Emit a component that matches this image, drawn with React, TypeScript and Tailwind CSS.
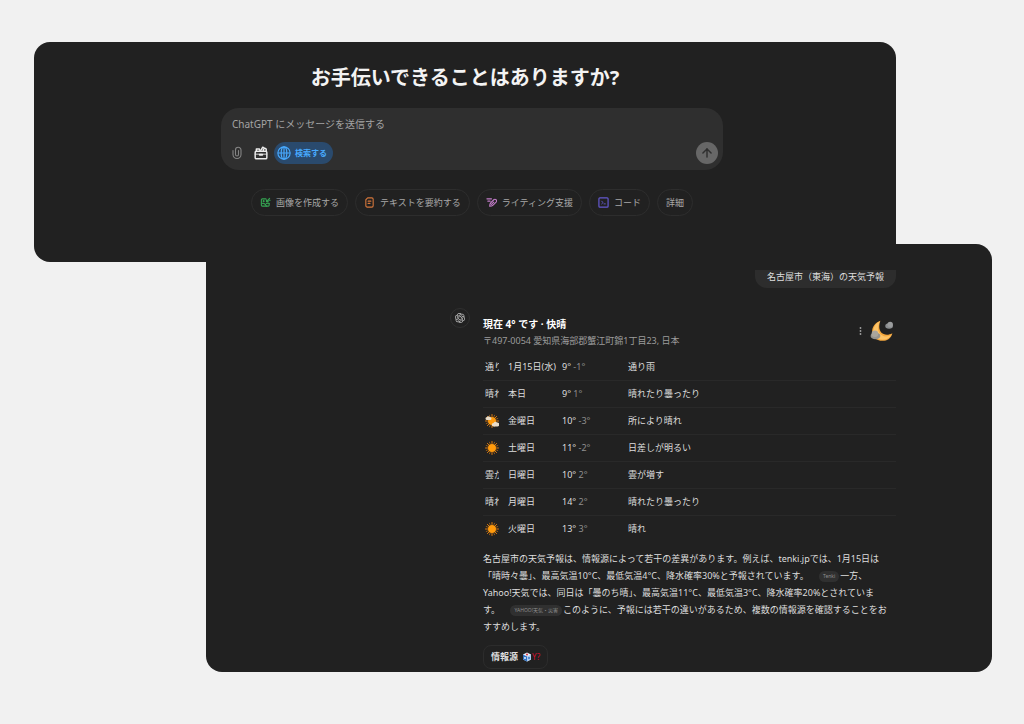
import React from 'react';
import { ArrowUp } from 'lucide-react';
import { RiOpenaiFill } from 'react-icons/ri';

const ClipIcon = () => (
  <svg viewBox="0 0 20 26" className="w-2.5 h-3.5" fill="none" stroke="currentColor" strokeWidth="2.2" strokeLinecap="round">
    <path d="M2 8v8a8 8 0 0 0 16 0V7a5.500 5.500 0 0 0-11 0v9a3 3 0 0 0 6 0V8" />
  </svg>
);

const ToolboxIcon = () => (
  <svg viewBox="0 0 24 24" className="w-3.5 h-3.5" fill="none" stroke="currentColor" strokeWidth="2.5" strokeLinejoin="round" strokeLinecap="round">
    <path d="M4 9h16a2 2 0 0 1 2 2v9a2 2 0 0 1-2 2H4a2 2 0 0 1-2-2v-9a2 2 0 0 1 2-2z" />
    <path d="M2 14h20" strokeWidth="1.500" />
    <path d="M10 15h4" strokeWidth="3.500" />
    <path d="M4 9V5h5l2 4" />
    <path d="M12 7l3-5 3 2M16 8c-1-3 4-6 5-2v3" />
  </svg>
);

const GlobeIcon = () => (
  <svg viewBox="0 0 24 24" className="w-3.5 h-3.5" fill="none" stroke="currentColor" strokeWidth="2">
    <circle cx="12" cy="12" r="10.500" />
    <ellipse cx="12" cy="12" rx="4.800" ry="10.500" />
    <path d="M1.500 12h21M12 1.500v21" />
  </svg>
);

const ImageIcon = () => (
  <svg viewBox="0 0 24 24" className="w-[11px] h-[11px] text-[#35a552]" fill="none" stroke="currentColor" strokeWidth="2.4" strokeLinecap="round" strokeLinejoin="round">
    <path d="M13 4H5a2 2 0 0 0-2 2v12a2 2 0 0 0 2 2h13a2 2 0 0 0 2-2v-4" />
    <path d="M4 14c5-1 8 1 10 6M14 14c2-1 4-1 6 0" />
    <circle cx="8" cy="9" r="1" />
    <path d="M14 10l7-7M14 6v4h4M19 7h3" />
  </svg>
);

const DocIcon = () => (
  <svg viewBox="0 0 24 24" className="w-[11px] h-[11px] text-[#d4763b]" fill="none" stroke="currentColor" strokeWidth="2.4" strokeLinecap="round" strokeLinejoin="round">
    <path d="M8 2h9a3 3 0 0 1 3 3v14a3 3 0 0 1-3 3H7a3 3 0 0 1-3-3V6z" />
    <path d="M9 9h6M9 14h4" />
  </svg>
);

const PenIcon = () => (
  <svg viewBox="0 0 24 24" className="w-[11px] h-[11px] text-[#c27cc8]" fill="none" stroke="currentColor" strokeWidth="2.4" strokeLinecap="round" strokeLinejoin="round">
    <path d="M8 20c0-4 1-6 3-8l6-6a3.500 3.500 0 0 1 5 5l-6 6c-2 2-4 3-8 3z" />
    <path d="M12 16l5-5M2 4h10M4 9h5" />
  </svg>
);

const CodeIcon = () => (
  <svg viewBox="0 0 24 24" className="w-[11px] h-[11px] text-[#6459d0]" fill="none" stroke="currentColor" strokeWidth="2.6" strokeLinecap="round" strokeLinejoin="round">
    <rect x="2" y="2" width="20" height="20" rx="2" />
    <path d="M8 9l3 3-3 3M13 15h3" strokeWidth="2" />
  </svg>
);

const SunIcon = ({ cloudy = false }: { cloudy?: boolean }) => (
  <svg viewBox="0 0 28 28" className="w-3.5 h-3.5">
    <g stroke="#d97a12" strokeWidth="2" strokeLinecap="round">
      <path d="M14 1v4M14 23v4M1 14h4M23 14h4M4.800 4.800l2.800 2.800M20.400 20.400l2.800 2.800M4.800 23.200l2.800-2.800M20.400 7.600l2.800-2.800" />
      <path d="M9 2.500l1 2.500M18 23l1 2.500M2.500 9l2.500 1M23 18l2.500 1M2.500 19l2.500-1M23 10l2.500-1M9 25.500l1-2.500M18 5l1-2.500" strokeWidth="1.300" />
    </g>
    <circle cx="14" cy="14" r="8" fill="#ff9a0c" />
    {cloudy && (
      <g fill="#e9dcc8">
        <path d="M4 12a3 3 0 0 1 0-6 4 4 0 0 1 6 0 3 3 0 0 1 0 6z" />
        <path d="M17 25a3.500 3.500 0 0 1 0-7 5 5 0 0 1 7-1 4 4 0 0 1 1 8z" />
      </g>
    )}
  </svg>
);

const MoonIcon = () => (
  <svg viewBox="0 0 44 40" className="w-6 h-6">
    <path d="M19 1C15 12 17 21 24 25c6 3 11 2 17-1-2 9-9 14-18 14C11 38 3 30 4 19 5 10 11 4 19 1z" fill="#f3a63c" />
    <path d="M18 2c-5 10-4 21 4 26 6 4 13 2 18-2-4 7-10 10-17 10C12 36 5 28 6 19 7 11 12 5 18 2z" fill="#fdc468" />
    <ellipse cx="35" cy="11" rx="7" ry="5" fill="#8b8e90" />
    <circle cx="37" cy="8" r="5" fill="#9b9d9e" />
    <ellipse cx="10" cy="29" rx="9" ry="6" fill="#96938d" />
    <circle cx="9" cy="25" r="6" fill="#aaa59c" />
  </svg>
);

const suggestions = [
  { label: '画像を作成する', icon: <ImageIcon /> },
  { label: 'テキストを要約する', icon: <DocIcon /> },
  { label: 'ライティング支援', icon: <PenIcon /> },
  { label: 'コード', icon: <CodeIcon /> },
  { label: '詳細', icon: null },
];

const forecast = [
  { icon: '通り', day: '1月15日(水)', high: '9°', low: '-1°', text: '通り雨' },
  { icon: '晴れ', day: '本日', high: '9°', low: '1°', text: '晴れたり曇ったり' },
  { icon: <SunIcon cloudy />, day: '金曜日', high: '10°', low: '-3°', text: '所により晴れ' },
  { icon: <SunIcon />, day: '土曜日', high: '11°', low: '-2°', text: '日差しが明るい' },
  { icon: '雲が', day: '日曜日', high: '10°', low: '2°', text: '雲が増す' },
  { icon: '晴れ', day: '月曜日', high: '14°', low: '2°', text: '晴れたり曇ったり' },
  { icon: <SunIcon />, day: '火曜日', high: '13°', low: '3°', text: '晴れ' },
];

const Cite = ({ children }: { children: React.ReactNode }) => (
  <a href="#" className="inline-block align-middle ml-2 mr-px px-1 rounded-full bg-[#303030] text-[5px] leading-[11px] text-[#8f8f8f]">
    {children}
  </a>
);

const PromptPanel = () => (
  <section className="ml-[34px] mr-32 pt-5 pb-[46px] rounded-2xl bg-[#212121]">
    <h1 className="px-2 text-center text-xl leading-8 font-bold text-[#f3f3f3]">お手伝いできることはありますか?</h1>

    <div className="pl-3.5">
      <form className="max-w-[502px] mx-auto mt-3.5 px-[11px] pt-2 pb-1.5 rounded-[18px] bg-[#2f2f2f]">
        <input
          type="text"
          aria-label="メッセージ"
          placeholder="ChatGPT にメッセージを送信する"
          className="block w-full h-4 text-[10px] text-gray-200 placeholder:text-[#a3a3a3] placeholder:opacity-100 focus:outline-none"
        />
        <div className="flex items-center mt-2.5">
          <button type="button" aria-label="添付" className="text-[#858585]">
            <ClipIcon />
          </button>
          <button type="button" aria-label="ツール" className="ml-3 text-[#ececec]">
            <ToolboxIcon />
          </button>
          <button type="button" className="flex items-center gap-1 ml-1.5 h-[22px] pl-[3px] pr-1.5 rounded-full bg-[#2a4a6d] text-[8px] font-bold text-[#48aaff]">
            <GlobeIcon />
            検索する
          </button>
          <button type="button" aria-label="送信" className="flex items-center justify-center ml-auto -mr-1.5 w-[22px] h-[22px] rounded-full bg-[#676767] text-[#2f2f2f]">
            <ArrowUp className="w-3.5 h-3.5" strokeWidth={2.5} />
          </button>
        </div>
      </form>

      <div className="flex flex-wrap justify-center gap-[7px] mt-[19px]">
        {suggestions.map((s) => (
          <button key={s.label} className="flex items-center gap-[5px] h-[27px] px-2 rounded-full border border-[#2d2d2d] text-[9px] text-[#a8a8a8]">
            {s.icon}
            {s.label}
          </button>
        ))}
      </div>
    </div>
  </section>
);

const AnswerPanel = () => (
  <section className="relative -mt-[18px] ml-[206px] mr-8 pt-[26px] pb-[3px] pl-[244px] pr-24 rounded-2xl rounded-tl-none bg-[#212121] text-[9px] text-[#dedede]">
    <div className="flex justify-end">
      <p className="px-3 pb-1 rounded-b-xl bg-[#2d2d2d] leading-[14px]">名古屋市（東海）の天気予報</p>
    </div>

    <div className="flex mt-5">
      <div className="flex shrink-0 items-center justify-center w-5 h-5 rounded-full border border-[#303030]">
        <RiOpenaiFill className="w-3 h-3 text-[#c9c9c9]" />
      </div>

      <div className="flex-1 min-w-0 ml-[13px] pt-2">
        {/* Current weather */}
        <div className="flex items-end justify-between">
          <div>
            <h2 className="text-[10px] leading-4 font-bold text-white">現在 4° です · 快晴</h2>
            <p className="leading-[17px] text-[#9c9c9c]">〒497-0054 愛知県海部郡蟹江町錦1丁目23, 日本</p>
          </div>
          <div className="flex items-center gap-2 pr-0.5 pb-1.5">
            <button aria-label="メニュー" className="text-[#a0a0a0]">
              <svg viewBox="0 0 4 12" className="w-[3px] h-2.5" fill="currentColor">
                <circle cx="2" cy="2" r="1.200" />
                <circle cx="2" cy="6" r="1.200" />
                <circle cx="2" cy="10" r="1.200" />
              </svg>
            </button>
            <MoonIcon />
          </div>
        </div>

        {/* Weekly forecast */}
        <table className="w-full mt-1 table-fixed">
          <tbody>
            {forecast.map((row) => (
              <tr key={row.day} className="h-[27px] border-b border-[#292929] last:border-0">
                <td className="w-[25px] pl-0.5">
                  <div className="w-3.5 overflow-hidden whitespace-nowrap">{row.icon}</div>
                </td>
                <td className="w-[54px] whitespace-nowrap">{row.day}</td>
                <td className="w-[66px]">
                  {row.high} <span className="text-[#8f8f8f]">{row.low}</span>
                </td>
                <td>{row.text}</td>
              </tr>
            ))}
          </tbody>
        </table>

        <p className="mt-2 leading-[17px]">
          名古屋市の天気予報は、情報源によって若干の差異があります。例えば、tenki.jpでは、1月15日は
          <br />
          「晴時々曇」、最高気温10°C、最低気温4°C、降水確率30%と予報されています。 <Cite>Tenki</Cite>一方、
          <br />
          Yahoo!天気では、同日は「曇のち晴」、最高気温11°C、最低気温3°C、降水確率20%とされていま
          <br />
          す。 <Cite>YAHOO!天気・災害</Cite>このように、予報には若干の違いがあるため、複数の情報源を確認することをお
          <br />
          すすめします。
        </p>

        <button className="flex items-center mt-2.5 h-6 px-[7px] rounded-lg border border-[#2c2c2c] font-bold">
          情報源
          <svg viewBox="0 0 20 20" className="w-2.5 h-2.5 ml-1">
            <path d="M10 1l8 4v10l-8 4-8-4V5z" fill="#e8eef6" />
            <path d="M2 5l8 4v10l-8-4z" fill="#2d6fc4" />
            <path d="M18 5l-8 4v10l8-4z" fill="#a9c9ee" />
            <circle cx="10" cy="5" r="2" fill="#d22f3c" />
            <circle cx="6" cy="12" r="1.800" fill="#fff" />
            <circle cx="14" cy="12" r="1.800" fill="#2d6fc4" />
          </svg>
          <span className="text-[8px] font-normal text-[#d3102f]">Y?</span>
        </button>
      </div>
    </div>
  </section>
);

export default function App() {
  return (
    <main className="min-h-screen pt-[42px] pb-[52px] bg-[#f1f1f1] font-['Noto_Sans','Noto_Sans_CJK_JP',sans-serif]">
      <PromptPanel />
      <AnswerPanel />
    </main>
  );
}
